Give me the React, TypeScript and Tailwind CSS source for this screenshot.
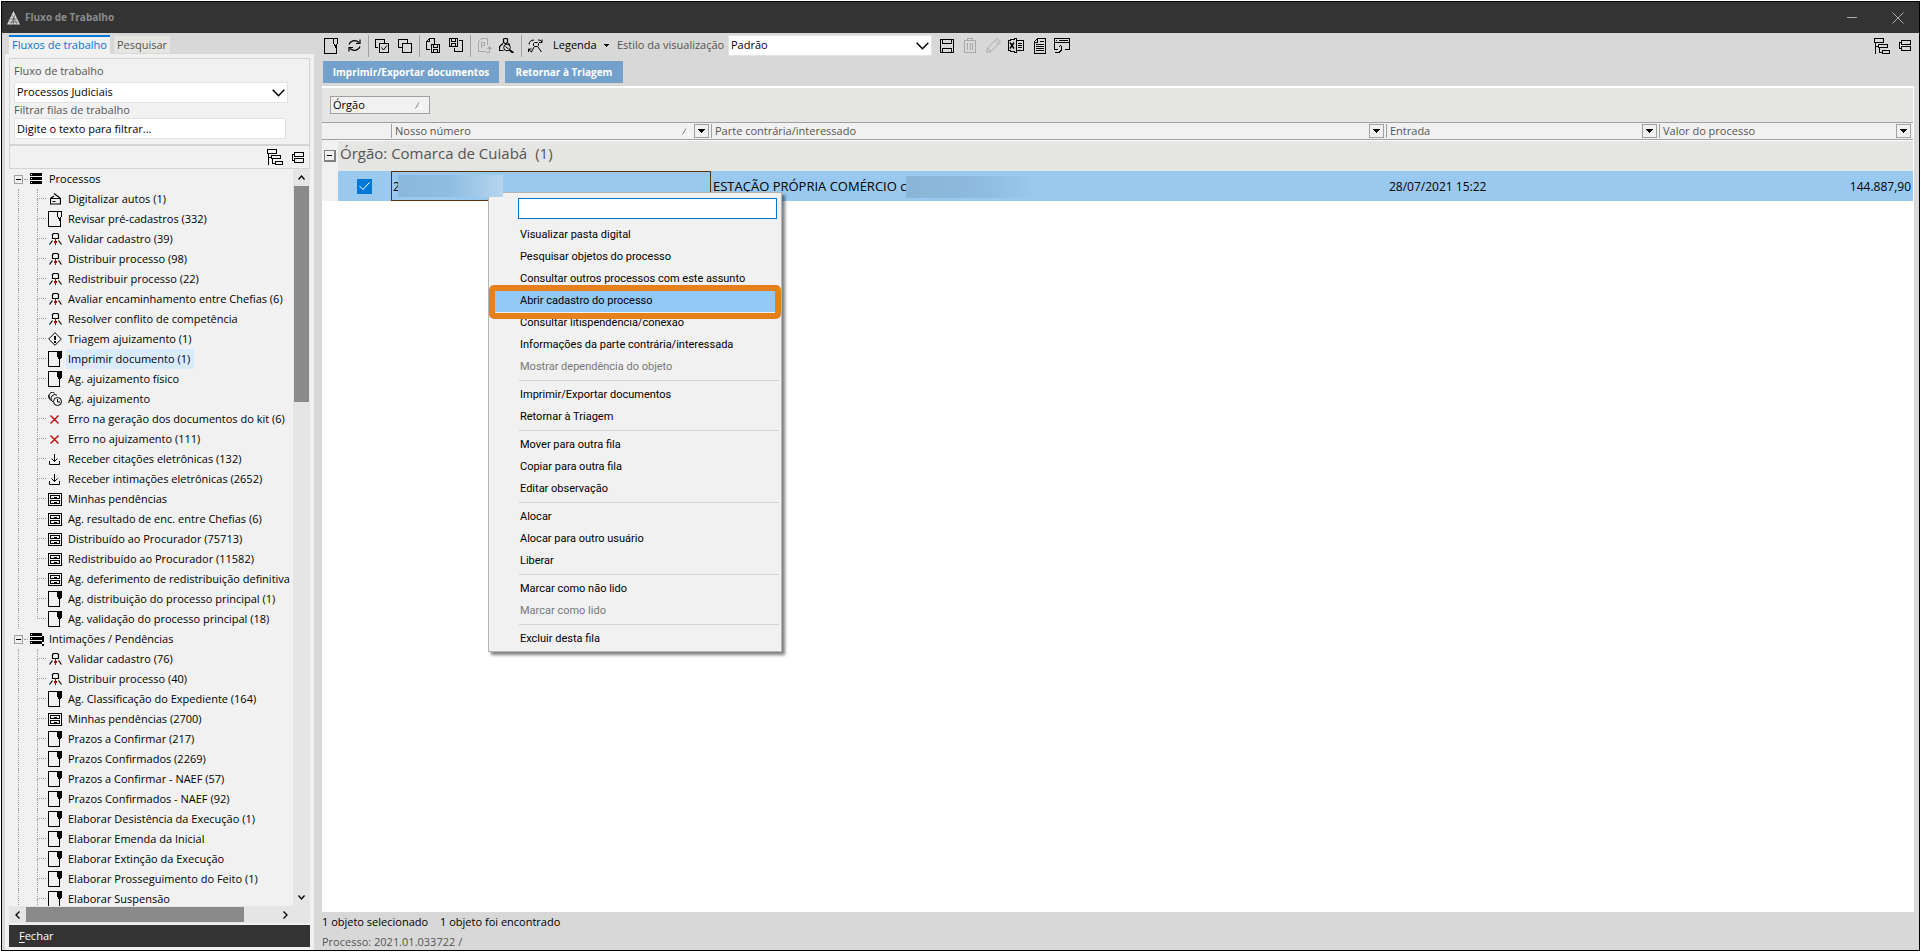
import React from "react";

type IconName =
  | "scan"
  | "cardOutline"
  | "card"
  | "person"
  | "triage"
  | "clocks"
  | "error"
  | "download"
  | "drawer";

type Item = { icon: IconName; label: string; selected?: boolean };

const GROUPS: { title: string; alert: boolean; open: boolean; items: Item[] }[] = [
  {
    title: "Processos",
    alert: false,
    open: false,
    items: [
      { icon: "scan", label: "Digitalizar autos (1)" },
      { icon: "cardOutline", label: "Revisar pré-cadastros (332)" },
      { icon: "person", label: "Validar cadastro (39)" },
      { icon: "person", label: "Distribuir processo (98)" },
      { icon: "person", label: "Redistribuir processo (22)" },
      { icon: "person", label: "Avaliar encaminhamento entre Chefias (6)" },
      { icon: "person", label: "Resolver conflito de competência" },
      { icon: "triage", label: "Triagem ajuizamento (1)" },
      { icon: "card", label: "Imprimir documento (1)", selected: true },
      { icon: "card", label: "Ag. ajuizamento físico" },
      { icon: "clocks", label: "Ag. ajuizamento" },
      { icon: "error", label: "Erro na geração dos documentos do kit (6)" },
      { icon: "error", label: "Erro no ajuizamento (111)" },
      { icon: "download", label: "Receber citações eletrônicas (132)" },
      { icon: "download", label: "Receber intimações eletrônicas (2652)" },
      { icon: "drawer", label: "Minhas pendências" },
      { icon: "drawer", label: "Ag. resultado de enc. entre Chefias (6)" },
      { icon: "drawer", label: "Distribuído ao Procurador (75713)" },
      { icon: "drawer", label: "Redistribuído ao Procurador (11582)" },
      { icon: "drawer", label: "Ag. deferimento de redistribuição definitiva" },
      { icon: "card", label: "Ag. distribuição do processo principal (1)" },
      { icon: "card", label: "Ag. validação do processo principal (18)" },
    ],
  },
  {
    title: "Intimações / Pendências",
    alert: true,
    open: true,
    items: [
      { icon: "person", label: "Validar cadastro (76)" },
      { icon: "person", label: "Distribuir processo (40)" },
      { icon: "card", label: "Ag. Classificação do Expediente (164)" },
      { icon: "drawer", label: "Minhas pendências (2700)" },
      { icon: "card", label: "Prazos a Confirmar (217)" },
      { icon: "card", label: "Prazos Confirmados (2269)" },
      { icon: "card", label: "Prazos a Confirmar - NAEF (57)" },
      { icon: "card", label: "Prazos Confirmados - NAEF (92)" },
      { icon: "card", label: "Elaborar Desistência da Execução (1)" },
      { icon: "card", label: "Elaborar Emenda da Inicial" },
      { icon: "card", label: "Elaborar Extinção da Execução" },
      { icon: "card", label: "Elaborar Prosseguimento do Feito (1)" },
      { icon: "card", label: "Elaborar Suspensão" },
    ],
  },
];

const MENU: { label: string; disabled?: boolean; active?: boolean }[][] = [
  [
    { label: "Visualizar pasta digital" },
    { label: "Pesquisar objetos do processo" },
    { label: "Consultar outros processos com este assunto" },
    { label: "Abrir cadastro do processo", active: true },
    { label: "Consultar litispendência/conexão" },
    { label: "Informações da parte contrária/interessada" },
    { label: "Mostrar dependência do objeto", disabled: true },
  ],
  [{ label: "Imprimir/Exportar documentos" }, { label: "Retornar à Triagem" }],
  [
    { label: "Mover para outra fila" },
    { label: "Copiar para outra fila" },
    { label: "Editar observação" },
  ],
  [{ label: "Alocar" }, { label: "Alocar para outro usuário" }, { label: "Liberar" }],
  [{ label: "Marcar como não lido" }, { label: "Marcar como lido", disabled: true }],
  [{ label: "Excluir desta fila" }],
];

function Svg({
  w,
  h,
  color = "#000",
  smooth,
  children,
}: {
  w: number;
  h: number;
  color?: string;
  smooth?: boolean;
  children: React.ReactNode;
}) {
  return (
    <svg
      className="shrink-0"
      width={w}
      height={h}
      viewBox={`0 0 ${w} ${h}`}
      fill="none"
      stroke={color}
      shapeRendering={smooth ? "auto" : "crispEdges"}
      aria-hidden="true"
    >
      {children}
    </svg>
  );
}

function TreeIcon({ name }: { name: IconName }) {
  switch (name) {
    case "scan":
      return (
        <Svg w={11} h={12} smooth>
          <path d="M.5 5.5h10v5.5H.5zM2.5 8.5h3M4 .5l6 4.5M.5 5.5 4 3" strokeWidth="1.200" />
        </Svg>
      );
    case "cardOutline":
      return (
        <Svg w={14} h={16}>
          <path d="M13.5.5H.5v15h11.5V9M9.500 .5v5l1.500 2v1.500h1v-1.500l1.500-2v-5" />
        </Svg>
      );
    case "card":
      return (
        <Svg w={14} h={16}>
          <path d="M10 .5H.5v15h11V8" />
          <path d="M9 0h5v6l-1 1v1h-3V7l-1-1z" fill="#000" stroke="none" />
        </Svg>
      );
    case "person":
      return (
        <Svg w={13} h={12} smooth>
          <path d="M4.500 .5h4l1 1v4h-6v-4zM3.500 7.500l-3 4M9.500 7.500l3 4" strokeWidth="1.200" />
          <path d="M6.500 5.500V12" stroke="#c00000" />
          <path d="M5 8h3v2H5z" fill="#c00000" stroke="none" />
        </Svg>
      );
    case "triage":
      return (
        <Svg w={14} h={14} smooth>
          <path d="M7 .7 13.300 7 7 13.300.7 7z" />
          <path d="M7 4v4M7 9v2" strokeWidth="2" />
        </Svg>
      );
    case "clocks":
      return (
        <Svg w={14} h={14} smooth>
          <circle cx="9.500" cy="9.500" r="4" />
          <path d="M9.500 7v3h2.500M4 8.500A4 4 0 0 1 2 1.500a3 3 0 0 1 4.500-.5M5 10A4 4 0 0 1 4 4a3.500 3.500 0 0 1 5-.7M2 6.500A4 4 0 0 1 1 3" />
        </Svg>
      );
    case "error":
      return (
        <Svg w={10} h={9} color="#c00000" smooth>
          <path d="m.5.500 8 8M8.500.500l-8 8" strokeWidth="1.300" />
        </Svg>
      );
    case "download":
      return (
        <Svg w={12} h={11} smooth>
          <path d="M.5 7v3.500h10V7M5.500 0v7.500M2.500 4.500l3 3 3-3" />
        </Svg>
      );
    case "drawer":
      return (
        <Svg w={14} h={13}>
          <path d="M.5.500h13v12H.500zM2.500 2.500h9v3h-9zM2.500 7.500h9v3h-9zM5.500 4h3M5.500 9h3" />
        </Svg>
      );
  }
}

function ExpandTree() {
  return (
    <Svg w={16} h={16}>
      <path d="M.5.500h9v4H.5zM1.500 5v11M1.500 8.500h3M4.500 6.500h9v3h-9zM5.500 10v5M5.500 14.500h3M8.500 12.500h7v3h-7z" />
    </Svg>
  );
}

function CollapseTree() {
  return (
    <Svg w={12} h={11}>
      <path d="M2.500.500h9v4h-9zM2.500 6.500h9v4h-9zM2 2.500H.500v6H2" />
    </Svg>
  );
}

function ToolButton({ label, children, className }: { label: string; children: React.ReactNode; className: string }) {
  return (
    <button type="button" aria-label={label} className={`flex h-5 shrink-0 items-center justify-center ${className}`}>
      {children}
    </button>
  );
}

function Separator() {
  return <span className="h-[22px] w-px shrink-0 bg-[#a0a0a0]" />;
}

function Chevron() {
  return (
    <span className="pointer-events-none absolute top-1/2 right-[3px] -translate-y-1/2">
      <Svg w={13} h={8} smooth>
        <path d="m.7.700 5.800 6 5.800-6" strokeWidth="1.500" />
      </Svg>
    </span>
  );
}

function SortMark() {
  return (
    <Svg w={8} h={7} color="#fff" smooth>
      <path d="M4 .500 7.500 6.500H1" />
      <path d="M.5 6.500 4 .500" stroke="#888" />
    </Svg>
  );
}

function FilterButton({ column }: { column: string }) {
  return (
    <button
      type="button"
      aria-label={`Filtrar ${column}`}
      className="flex h-[14px] w-[15px] shrink-0 items-center justify-center border border-[#a0a0a0] bg-[#f1f1f1]"
    >
      <Svg w={7} h={4}>
        <path d="M0 0h7L3.500 4z" fill="#000" stroke="none" />
      </Svg>
    </button>
  );
}

function HeaderCell({ label, sorted }: { label: string; sorted?: boolean }) {
  return (
    <th scope="col" className="border-y border-[#a0a0a0] p-0 font-normal">
      <div className="flex h-[14px] items-center border-l border-[#a0a0a0] pr-[2px] pl-[3px]">
        <span className="flex-1 text-left">{label}</span>
        {sorted && (
          <span className="mr-1">
            <SortMark />
          </span>
        )}
        <FilterButton column={label} />
      </div>
    </th>
  );
}

function TitleBar() {
  return (
    <header className="flex h-[31px] shrink-0 items-center bg-[#333] pl-[5px] text-[#8c8c8c]">
      <Svg w={13} h={14} color="#ccc" smooth>
        <path d="M6.500 0 13 13.500H0z" fill="#d8d8d8" stroke="none" />
        <path d="M3 8h7M2 11h9M5 4l5 9M8 4l-4 9M6.500 6v8" stroke="#444" strokeWidth=".6" />
      </Svg>
      <h1 className="ml-[5px] flex-1 text-[10px] font-bold">Fluxo de Trabalho</h1>
      <button type="button" aria-label="Minimizar" className="flex size-[30px] items-center justify-center">
        <Svg w={10} h={1} color="#aaa">
          <path d="M0 .5h10" />
        </Svg>
      </button>
      <button type="button" aria-label="Fechar janela" className="mr-[6px] ml-4 flex size-[30px] items-center justify-center">
        <Svg w={12} h={12} color="#aaa" smooth>
          <path d="m.5.500 11 11M11.500.500l-11 11" />
        </Svg>
      </button>
    </header>
  );
}

function TreeRow({ item, last }: { item: Item; last: boolean }) {
  return (
    <li className="flex h-5 items-center">
      <span className="ml-[9px] h-5 w-[19px] shrink-0 border-l border-dotted border-[#a0a0a0]" />
      <span className="flex h-5 w-[9px] shrink-0 flex-col">
        <span className="h-[10px] border-b border-l border-dotted border-[#a0a0a0]" />
        {!last && <span className="h-[10px] border-l border-dotted border-[#a0a0a0]" />}
      </span>
      <span className="flex w-[18px] shrink-0 justify-center">
        <TreeIcon name={item.icon} />
      </span>
      <a
        href="#fila"
        className={`ml-[2px] h-5 pr-1 pl-[2px] leading-5 whitespace-nowrap ${item.selected ? "bg-[#d9ebff]" : ""}`}
      >
        {item.label}
      </a>
    </li>
  );
}

function Tree() {
  return (
    <div className="flex min-h-0 flex-1">
      <div className="min-h-0 flex-1 overflow-hidden text-[11px] text-black">
        {GROUPS.map((group) => (
          <section key={group.title}>
            <div className="flex h-5 items-center">
              <button
                type="button"
                aria-label={`Recolher ${group.title}`}
                className="ml-[5px] flex size-[9px] shrink-0 items-center justify-center border border-[#a0a0a0]"
              >
                <span className="h-px w-[5px] bg-black" />
              </button>
              <span className="ml-px w-[4px] border-t border-dotted border-[#a0a0a0]" />
              <span className="ml-[2px] w-[19px] shrink-0">
                <Svg w={14} h={13}>
                  <path d="M0 0h12v3H0zM0 4h12v3H0zM0 8h12v3H0z" fill="#000" stroke="none" />
                  <path d="M1 1.500h1M1 5.500h1M1 9.500h1" stroke="#fff" />
                  {group.alert && <path d="M13 3v6M13 11v2" strokeWidth="2" />}
                </Svg>
              </span>
              <h2 className="whitespace-nowrap">{group.title}</h2>
            </div>
            <ul>
              {group.items.map((item, index) => (
                <TreeRow key={item.label} item={item} last={!group.open && index === group.items.length - 1} />
              ))}
            </ul>
          </section>
        ))}
      </div>
      <div className="flex w-[17px] shrink-0 flex-col items-center bg-[#e5e5e5] pr-px">
        <span className="flex h-[17px] items-center">
          <Svg w={7} h={5} smooth>
            <path d="m.5 4.500 3-3.500 3 3.500" strokeWidth="1.300" />
          </Svg>
        </span>
        <span className="h-[216px] w-[15px] bg-[#8a8a8a]" />
        <span className="mt-auto flex h-[17px] items-center">
          <Svg w={7} h={5} smooth>
            <path d="m.5.500 3 3.500 3-3.500" strokeWidth="1.300" />
          </Svg>
        </span>
      </div>
    </div>
  );
}

function Sidebar() {
  return (
    <aside className="flex w-[309px] shrink-0 flex-col">
      <div role="tablist" className="mt-[2px] flex h-[19px] items-end pl-1 text-[11px]">
        <button
          type="button"
          role="tab"
          aria-selected="true"
          className="flex h-[19px] w-[101px] items-start justify-center border-t-2 border-[#0078d7] bg-[#f1f1f1] leading-[15px] whitespace-nowrap text-[#0078d7]"
        >
          Fluxos de trabalho
        </button>
        <button
          type="button"
          role="tab"
          aria-selected="false"
          className="mb-px ml-1 h-[17px] w-[56px] bg-[#e5e5e2] leading-[17px] text-[#555]"
        >
          Pesquisar
        </button>
      </div>
      <div className="flex min-h-0 flex-1 flex-col bg-[#f1f1f1] px-1 pt-1 pb-[3px]">
        <div className="flex h-[88px] flex-col border border-b-2 border-[#d4d4d4] px-1 pt-[3px] text-[11px] text-[#555]">
          <label htmlFor="fluxo" className="h-5 leading-[17px]">
            Fluxo de trabalho
          </label>
          <div className="relative h-[21px] w-[274px]">
            <select
              id="fluxo"
              className="h-[21px] w-full appearance-none border border-[#e2e2e2] bg-white px-[2px] text-black"
              defaultValue="Processos Judiciais"
            >
              <option>Processos Judiciais</option>
            </select>
            <Chevron />
          </div>
          <label htmlFor="filtro" className="h-[15px] leading-[14px]">
            Filtrar filas de trabalho
          </label>
          <input
            id="filtro"
            className="h-[21px] w-[272px] border border-[#e2e2e2] bg-white px-[2px] pb-px text-black"
            defaultValue="Digite o texto para filtrar..."
          />
        </div>
        <div className="flex h-[23px] shrink-0 items-center justify-end border border-t-0 border-[#d4d4d4] pr-[5px]">
          <ToolButton label="Expandir filas" className="w-4">
            <ExpandTree />
          </ToolButton>
          <ToolButton label="Recolher filas" className="ml-[9px] w-3">
            <CollapseTree />
          </ToolButton>
        </div>
        <Tree />
        <div className="flex h-[17px] shrink-0 items-center bg-[#e5e5e5]">
          <span className="flex w-[17px] justify-center">
            <Svg w={5} h={8} smooth>
              <path d="M4.500.500 1 4l3.500 3.500" strokeWidth="1.300" />
            </Svg>
          </span>
          <span className="h-[15px] w-[218px] bg-[#8a8a8a]" />
          <span className="mr-[20px] ml-auto flex w-[10px] justify-center">
            <Svg w={5} h={8} smooth>
              <path d="M.5.500 4 4 .5 7.500" strokeWidth="1.300" />
            </Svg>
          </span>
        </div>
        <button
          type="button"
          className="mt-[2px] h-[22px] shrink-0 bg-[#333] pl-[10px] text-left text-[11px] text-white"
        >
          <u className="underline-offset-2">F</u>echar
        </button>
      </div>
    </aside>
  );
}

function Toolbar() {
  return (
    <div className="flex h-[25px] items-center pl-1 text-[11px]">
      <ToolButton label="Novo" className="w-[14px]">
        <TreeIcon name="cardOutline" />
      </ToolButton>
      <ToolButton label="Atualizar" className="ml-[10px] w-[13px]">
        <Svg w={13} h={13} smooth>
          <path
            d="M1 5.500C2 2 7 0 11 3.500M12 .500v4H8M12 7.500c-1 3.500-6 5.500-10 2M1 12.500v-4h4"
            strokeWidth="1.200"
          />
        </Svg>
      </ToolButton>
      <span className="ml-[7px]" />
      <Separator />
      <ToolButton label="Selecionar todos" className="ml-[6px] w-[14px]">
        <Svg w={14} h={14}>
          <path d="M3 8.500H.500v-8h9V4M4.500 4.500h9v9h-9z" />
          <path d="m6.500 8.500 2 2.500 3.500-4.500" shapeRendering="auto" />
        </Svg>
      </ToolButton>
      <ToolButton label="Limpar seleção" className="ml-[9px] w-[14px]">
        <Svg w={14} h={14}>
          <path d="M4 8.500H.500v-8h9V4M4.500 4.500h9v9h-9z" />
        </Svg>
      </ToolButton>
      <span className="ml-[7px]" />
      <Separator />
      <ToolButton label="Salvar documento" className="ml-[6px] w-[14px]">
        <Svg w={14} h={15}>
          <path d="M4 11.500H.500v-8l3-3h5V6M.500 3.500h3v-3M5.500 6.500h8v8h-8zM7.500 7v2.500h4V7M7.500 14v-2.500h4V14" />
        </Svg>
      </ToolButton>
      <ToolButton label="Salvar como" className="ml-[9px] w-[14px]">
        <Svg w={14} h={15}>
          <path d="M.5.500h8v8h-8zM2.500 1v2.500h4V1M2.500 8V5.500h4V8M5.500 10v3.500h8v-11H10" />
        </Svg>
      </ToolButton>
      <span className="ml-[7px]" />
      <Separator />
      <ToolButton label="Publicar" className="ml-[7px] w-[14px]">
        <Svg w={14} h={15} color="#aaa">
          <path d="M8 13.500H.500v-10l3-3h6V7M3.500 10V4.500h3v3h-3M8 14.500h3.500V9M9.500 11l2-2 2 2" />
        </Svg>
      </ToolButton>
      <ToolButton label="Localizar pessoa" className="ml-[7px] w-[15px]">
        <Svg w={15} h={15} smooth>
          <path
            d="M4.500 1 6 .500h1L8.500 1v3.500L7 5.500H6L4.500 4.500zM4 5.500.500 8.500v4h4M9 5.500l2 1"
            strokeWidth="1.200"
          />
          <circle cx="8" cy="9.500" r="3.300" />
          <path d="m10.500 12 4 3" strokeWidth="2" />
          <path d="m6.500 8.500 3 2.500" />
        </Svg>
      </ToolButton>
      <span className="ml-[7px]" />
      <Separator />
      <ToolButton label="Redistribuir" className="ml-[6px] w-[15px]">
        <Svg w={15} h={14} smooth>
          <path d="M6.500 3.500h3l1 1v2l-1 1h-3l-1-1v-2zM6 8l-2.500 5M10 8l3.500 5M1 5.500C1 3 3 1 6 1M14 .500v3h-3M14 3C13 1.500 11.500 1 10 1M.5 13v-3h3M1 10c.5 1.500 1.500 2.500 3 3" />
        </Svg>
      </ToolButton>
      <button type="button" className="ml-[10px] flex items-center gap-[5px] text-[11px] text-black">
        <span className="w-[46px] text-left">Legenda</span>
        <Svg w={5} h={3}>
          <path d="M0 0h5L2.500 3z" fill="#000" stroke="none" />
        </Svg>
      </button>
      <label htmlFor="estilo" className="ml-[8px] w-[111px] text-[11px] whitespace-nowrap text-[#555]">
        Estilo da visualização
      </label>
      <div className="relative w-[204px]">
        <select
          id="estilo"
          className="block h-[21px] w-full appearance-none border border-[#e2e2e2] bg-white px-[2px] text-black"
          defaultValue="Padrão"
        >
          <option>Padrão</option>
        </select>
        <Chevron />
      </div>
      <ToolButton label="Salvar estilo" className="ml-[8px] w-[14px]">
        <Svg w={14} h={14}>
          <path d="M.5.500h13v13H.500zM2.500 1v3.500h9V1M2.500 13V9.500h9V13" />
        </Svg>
      </ToolButton>
      <ToolButton label="Excluir estilo" className="ml-[10px] w-[12px]">
        <Svg w={12} h={15} color="#aaa">
          <path d="M0 2.500h12M3.500 2V.500h5V2M.5 3v11.500h11V3M3.500 5v7M6 5v7M8.500 5v7" />
        </Svg>
      </ToolButton>
      <ToolButton label="Editar estilo" className="ml-[10px] w-[15px]">
        <Svg w={15} h={15} color="#aaa" smooth>
          <path d="m.5 14.500 1-4.500L11 .500 14.500 4 5 13.500zM9 2.500 12.500 6M1.500 10 5 13.500" />
        </Svg>
      </ToolButton>
      <ToolButton label="Exportar para Excel" className="ml-[7px] w-4">
        <Svg w={16} h={15}>
          <path d="M.5 2.500 8.500.500v14l-8-2zM9 2.500h6.500v10H9M10 5.500h4M10 7.500h4M10 9.500h4" />
          <path d="m2 4.500 4 6M6 4.500l-4 6" strokeWidth="1.500" shapeRendering="auto" />
        </Svg>
      </ToolButton>
      <ToolButton label="Relatório" className="ml-[10px] w-[12px]">
        <Svg w={12} h={16}>
          <path d="M3.500.500h8v15H.500v-12zM.5 4.500h3v-4M2 6.500h8M2 8.500h8M2 10.500h8M2 12.500h8M6 3.500h4" />
        </Svg>
      </ToolButton>
      <ToolButton label="Abrir em janela" className="ml-[8px] w-4">
        <Svg w={16} h={15}>
          <path d="M4 11.500H.500V.500h15v11H11M0 4.500h16M2 2.500h1M5 2.500h9M1 14.500h4l2-2V8M4.500 9.500l2-2 2 2" />
        </Svg>
      </ToolButton>
      <ToolButton label="Expandir grupos" className="ml-auto w-4">
        <ExpandTree />
      </ToolButton>
      <ToolButton label="Recolher grupos" className="mr-2 ml-[9px] w-3">
        <CollapseTree />
      </ToolButton>
    </div>
  );
}

function Grid() {
  return (
    <div className="mr-[5px] ml-[2px] flex min-h-0 flex-1 flex-col border-t-2 border-r border-b border-white bg-white">
      <div className="h-[34px] shrink-0 bg-[#e5e5e3] px-2 pt-2">
        <button
          type="button"
          className="flex h-[18px] w-[100px] items-center justify-between border border-[#a0a0a0] bg-[#f1f1f1] pr-[6px] pl-[2px] text-[11px] text-black"
        >
          Órgão
          <SortMark />
        </button>
      </div>
      <table className="w-full table-fixed border-separate border-spacing-0">
        <colgroup>
          <col className="w-[16px]" />
          <col className="w-[53px]" />
          <col className="w-[320px]" />
          <col />
          <col className="w-[273px]" />
          <col className="w-[254px]" />
        </colgroup>
        <thead className="bg-[#f1f1f1] text-[11px] text-[#555]">
          <tr className="h-[18px]">
            <th colSpan={2} aria-label="Seleção" className="border-y border-[#a0a0a0] p-0" />
            <HeaderCell label="Nosso número" sorted />
            <HeaderCell label="Parte contrária/interessado" />
            <HeaderCell label="Entrada" />
            <HeaderCell label="Valor do processo" />
          </tr>
        </thead>
        <tbody>
          <tr className="h-[31px]">
            <td className="bg-[#f1f1f1] p-0">
              <button
                type="button"
                aria-label="Recolher grupo"
                className="ml-[2px] flex size-3 items-center justify-center border border-r-2 border-b-2 border-[#808080]"
              >
                <span className="h-px w-[5px] bg-black" />
              </button>
            </td>
            <td colSpan={5} className="border-t border-white bg-[#e5e5e3] p-0 pb-[6px] pl-[2px] text-[15px] text-[#555]">
              <span className="mr-2">Órgão: Comarca de Cuiabá</span>
              <span>(1)</span>
            </td>
          </tr>
          <tr className="h-[30px] bg-[#99c9ef] text-[12px] text-black">
            <td className="bg-[#f1f1f1] p-0" />
            <td className="p-0">
              <label className="ml-[19px] flex size-[15px] items-center justify-center bg-[#0078d7]">
                <input type="checkbox" aria-label="Selecionar processo" className="sr-only" defaultChecked />
                <Svg w={11} h={8} color="#fff" smooth>
                  <path d="m.5 4 3.500 3.500L10.500.500" />
                </Svg>
              </label>
            </td>
            <td className="border border-[#5a3210] p-0 pt-[2px] pl-px">2</td>
            <td className="p-0 pt-[2px] pl-[2px] text-[13px]">
              <div className="flex h-[26px] items-center whitespace-nowrap">
                ESTAÇÃO PRÓPRIA COMÉRCIO c
                <span className="h-[22px] w-[130px] bg-linear-to-r from-[#8ab5d6] via-[#8cb9dd] to-[#99c9ef]" />
              </div>
            </td>
            <td className="p-0 pt-[2px] pl-[3px]">28/07/2021 15:22</td>
            <td className="p-0 pt-[2px] pr-[2px] text-right">144.887,90</td>
          </tr>
        </tbody>
      </table>
    </div>
  );
}

function ContextMenu() {
  return (
    <div
      role="menu"
      className="absolute top-[192px] left-[488px] w-[294px] border border-[#b4b4b4] bg-[#f1f1f1] pt-[5px] pr-[2px] pb-px font-[Roboto,sans-serif] text-[11px] text-black shadow-[3px_3px_3px_rgba(0,0,0,0.5)]"
    >
      <input
        aria-label="Pesquisar no menu"
        className="mb-[5px] ml-[29px] block h-[21px] w-[259px] border border-[#0078d7] bg-white px-1 outline-none"
      />
      {MENU.map((section, index) => (
        <div key={section[0].label}>
          {index > 0 && <hr className="mt-[2px] mb-[3px] ml-[30px] border-[#d4d4d4]" />}
          {section.map((entry) => (
            <button
              key={entry.label}
              type="button"
              role="menuitem"
              disabled={entry.disabled}
              className={`relative block h-[22px] w-full pl-[31px] text-left whitespace-nowrap disabled:text-[#777] ${entry.active ? "bg-[#91c9f7]" : ""}`}
            >
              {entry.label}
              {entry.active && (
                <span className="absolute -top-[5px] -right-[2px] -bottom-[7px] left-0 z-10 rounded-[5px] border-[6px] border-[#e6801c]" />
              )}
            </button>
          ))}
        </div>
      ))}
    </div>
  );
}

export default function App() {
  return (
    <div className="relative h-screen overflow-hidden bg-white p-px font-['Open_Sans','Noto_Sans',sans-serif]">
      <div className="flex h-full flex-col border border-black bg-[#d8d8d8]">
        <TitleBar />
        <div className="flex min-h-0 flex-1 pl-[3px]">
          <Sidebar />
          <main className="ml-[6px] flex min-w-0 flex-1 flex-col">
            <Toolbar />
            <div className="mt-[3px] flex h-[25px] items-start gap-[6px] pl-[3px] text-[10px] font-bold text-white">
              <button type="button" className="h-[22px] w-[176px] bg-[#73a1cb]">
                Imprimir/Exportar documentos
              </button>
              <button type="button" className="h-[22px] w-[118px] bg-[#73a1cb]">
                Retornar à Triagem
              </button>
            </div>
            <Grid />
            <footer className="h-[38px] shrink-0 pl-[2px] text-[11px] text-[#555]">
              <p className="flex h-5 items-center gap-3 text-black">
                <span>1 objeto selecionado</span>
                <span>1 objeto foi encontrado</span>
              </p>
              <p className="leading-[19px]">Processo: 2021.01.033722 /</p>
            </footer>
          </main>
        </div>
      </div>
      <ContextMenu />
      <div className="absolute top-[175px] left-[398px] h-[22px] w-[105px] bg-linear-to-r from-[#8ab8dc] via-[#8fbde2] to-[#b5d5ee]" />
    </div>
  );
}
